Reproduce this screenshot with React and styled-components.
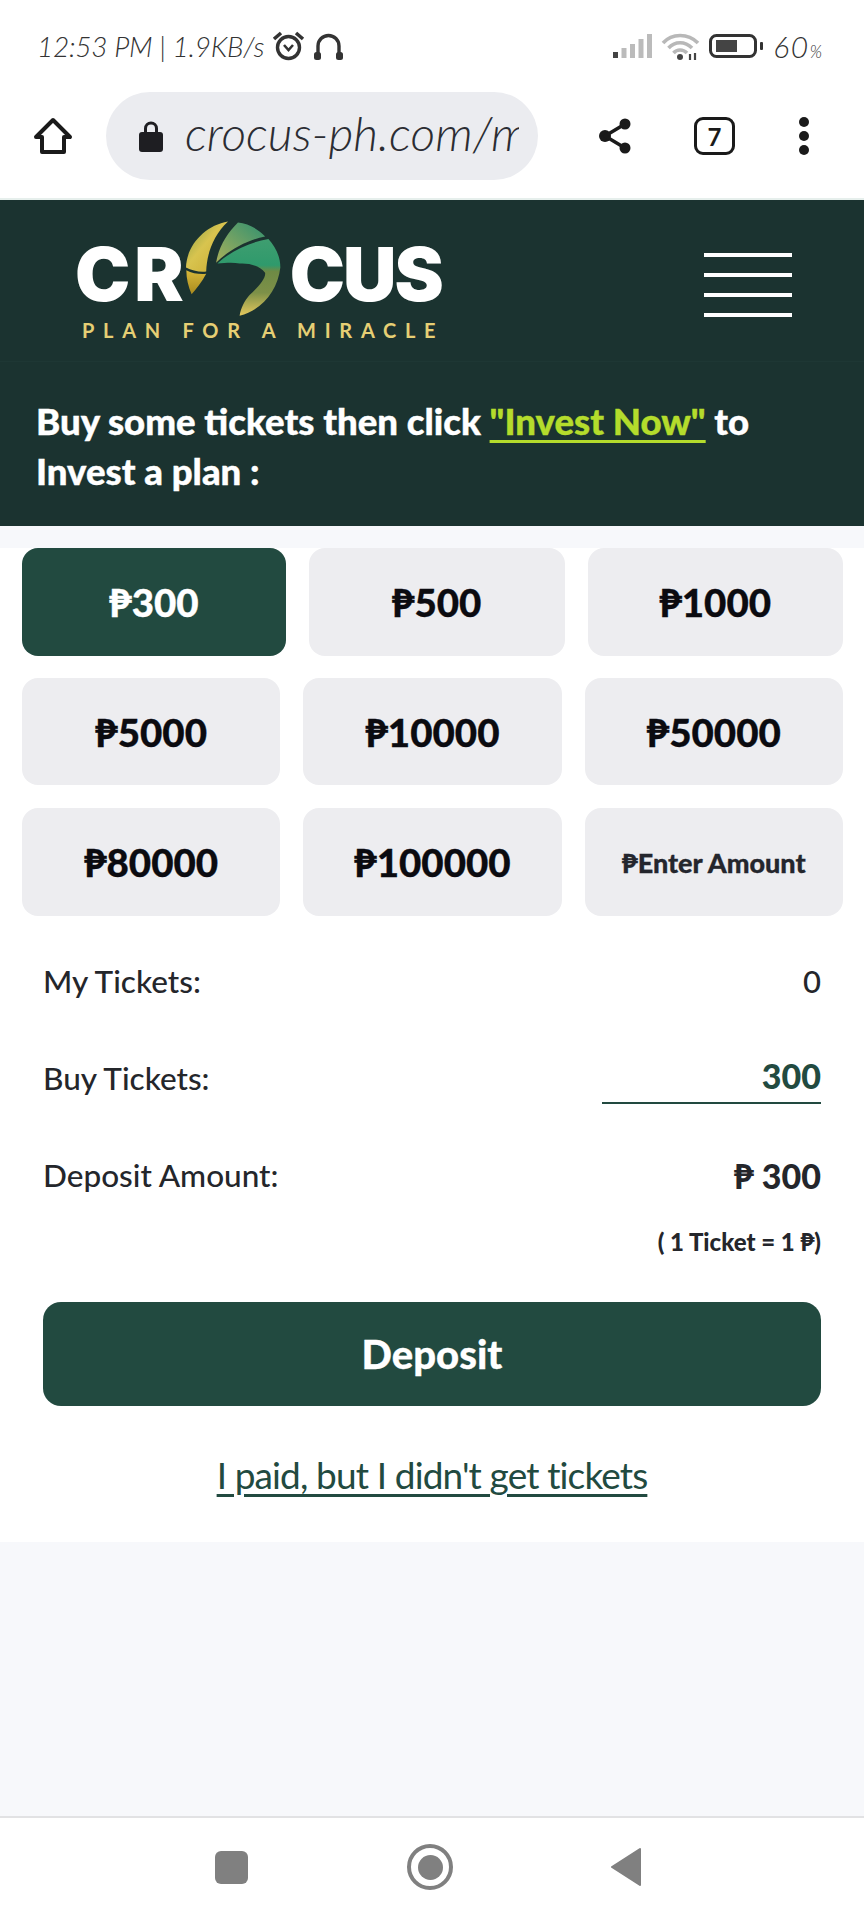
import React from "react";
import styled, { createGlobalStyle } from "styled-components";

const Global = createGlobalStyle`
  html, body { margin: 0; padding: 0; background: #fff; }
  * { box-sizing: border-box; }
`;
const FONT = `Lato, "Noto Sans", sans-serif`;
const GREEN = "#224a40";

const Page = styled.div`
  width: 864px; height: 1920px; display: flex; flex-direction: column;
  background: #f7f8fb; font-family: ${FONT}; overflow: hidden; color: #1d1f24;
`;
const StatusBar = styled.div`
  height: 92px; flex: none; background: #fff; display: flex; align-items: center;
  justify-content: space-between; padding: 0 42px 0 37px;
`;
const StatusGroup = styled.div`display: flex; align-items: center; gap: ${p => p.$gap || 8}px;`;
const StatusText = styled.span`
  font-size: 28px; font-weight: 300; font-style: italic; color: #333; letter-spacing: -0.25px; white-space: nowrap;
`;
const BatteryLevel = styled.span`
  font-size: 30px; font-weight: 300; font-style: italic; color: #333; letter-spacing: 1.5px; white-space: nowrap;
`;
const Percent = styled.span`font-size: 17px; letter-spacing: 0;`;
const BrowserBar = styled.div`
  height: 108px; flex: none; background: #fff; border-bottom: 2px solid #e6efec;
  display: flex; align-items: center; padding: 0 0 18px 33px;
`;
const Pill = styled.div`
  width: 432px; height: 88px; margin-left: 33px; border-radius: 44px; background: #ebecf0;
  display: flex; align-items: center; padding: 0 19px 0 33px; gap: 22px; flex: none;
`;
const Url = styled.span`
  flex: 1; min-width: 0; overflow: hidden; white-space: nowrap; font-size: 48px; font-weight: 300;
  font-style: italic; color: #2b2d33; letter-spacing: 0; line-height: 60px; margin-bottom: 7px;
`;
const BarActions = styled.div`display: flex; align-items: center; margin-left: 60px;`;
const TabCount = styled.div`
  width: 41px; height: 38px; margin-left: 62px; border: 3.5px solid #1a1a1a; border-radius: 9px;
  display: flex; align-items: center; justify-content: center; font-size: 24px; font-weight: 700; color: #1a1a1a;
`;
const Dots = styled.div`
  margin-left: 64px; display: flex; flex-direction: column; gap: 4px;
  & > i { display: block; width: 10px; height: 10px; border-radius: 50%; background: #1a1a1a; }
`;
const Header = styled.header`
  flex: none; height: 162px; background: #1b3330; border-bottom: 1px solid #1e3734;
  display: flex; align-items: flex-start; justify-content: space-between; padding: 20px 72px 0 75px;
`;
const Logo = styled.div`width: 365px; display: flex; flex-direction: column;`;
const LogoMark = styled.div`display: flex; align-items: flex-start; height: 103px;`;
const LogoWord = styled.span`
  font-family: Inter, Lato, sans-serif; font-size: 74px; font-weight: 900; color: #fff; line-height: 52px; margin-top: 28px;
  letter-spacing: ${p => p.$ls || 0}px; white-space: nowrap;
`;
const LogoGraphic = styled.svg`flex: none; margin: 0 9px 0 -3px;`;
const Tagline = styled.div`
  margin-left: 7px; font-size: 20px; font-weight: 700; color: #e6cf74; letter-spacing: 8.7px; line-height: 14px; white-space: nowrap;
`;
const Burger = styled.div`
  width: 88px; margin-top: 33px; display: flex; flex-direction: column; gap: 16px;
  & > i { display: block; height: 4px; background: #fff; }
`;
const Notice = styled.div`
  flex: none; height: 164px; background: #1b3330; padding: 34px 36px 0;
  color: #fff; font-size: 36.6px; font-weight: 900; line-height: 50px; -webkit-text-stroke: 0.4px #fff;
`;
const NoticeLink = styled.a`
  color: #b4dc2c; -webkit-text-stroke: 0.4px #b4dc2c; text-decoration: underline; text-decoration-thickness: 3px; text-underline-offset: 5px;
`;
const Card = styled.main`
  flex: none; height: 994px; margin-top: 22px; background: #fff; padding: 0 21px 0 22px;
  display: flex; flex-direction: column;
`;
const AmountRow = styled.div`
  display: flex; gap: 23px; margin-bottom: ${p => p.$mb}px; height: ${p => p.$h}px; flex: none;
`;
const Amount = styled.button`
  flex: ${p => (p.$active ? "0 0 264px" : "1 1 0")}; min-width: 0; border: 0; padding: 0; border-radius: 16px;
  background: ${p => (p.$active ? GREEN : "#ededf0")}; color: ${p => (p.$active ? "#fff" : p.$small ? "#24262d" : "#0b0b10")};
  font-family: ${FONT}; font-weight: 900; font-size: ${p => (p.$small ? 27 : 38.5)}px; -webkit-text-stroke: 0.3px currentColor;
`;
const Info = styled.div`display: flex; flex-direction: column; padding: 0 22px 0 21px;`;
const InfoRow = styled.div`
  display: flex; justify-content: space-between; align-items: center; height: ${p => p.$h}px; margin-top: ${p => p.$mt || 0}px;
  font-size: 31.5px; font-weight: 500; color: #24262b;
`;
const InfoValue = styled.span`
  font-weight: ${p => (p.$bold ? 900 : 500)}; color: ${p => p.$color || "#24262b"}; font-size: ${p => (p.$bold ? 34 : 31)}px;
`;
const BuyField = styled.div`
  width: 219px; height: 50px; text-align: right; border-bottom: 2px solid ${GREEN}; line-height: 44px; margin-top: 2px;
`;
const RateNote = styled.div`
  text-align: right; font-size: 24px; font-weight: 900; color: #24262b; line-height: 30px; margin-top: 7px;
`;
const DepositButton = styled.button`
  height: 104px; margin: 45px 22px 0 21px; flex: none; border: 0; border-radius: 18px; background: ${GREEN}; color: #fff;
  font-family: ${FONT}; font-size: 40px; font-weight: 900; -webkit-text-stroke: 0.3px #fff;
`;
const Help = styled.a`
  align-self: center; margin: 46px 0 0 -1px; font-size: 37px; font-weight: 400; color: ${GREEN}; letter-spacing: -0.87px;
  text-decoration: underline; text-decoration-thickness: 3px; text-underline-offset: 5px;
`;
const Spacer = styled.div`flex: 1;`;
const NavBar = styled.nav`
  flex: none; height: 104px; background: #fff; border-top: 2px solid #e2e2e4; display: flex; align-items: center; padding-bottom: 4px;
`;
const Square = styled.div`width: 33px; height: 33px; margin-left: 215px; border-radius: 6px; background: #808080;`;
const Ring = styled.div`
  width: 46px; height: 46px; margin-left: 159px; border-radius: 50%; border: 4px solid #808080; display: flex; align-items: center; justify-content: center;
  & > i { display: block; width: 25px; height: 25px; border-radius: 50%; background: #808080; }
`;
const BackIcon = styled.svg`margin-left: 157px;`;

const HomeIcon = () => (
  <svg width="40" height="38" viewBox="0 0 40 38" fill="none" stroke="#1a1a1a" strokeWidth="4" strokeLinejoin="round">
    <path d="M20 3 L37 20 H31 V35 H9 V20 H3 Z" />
  </svg>
);
const LockIcon = () => (
  <svg width="24" height="32" viewBox="0 0 24 32" style={{ flex: "none" }}>
    <path d="M6.5 13 V8.5 a5.5 5.5 0 0 1 11 0 V13" fill="none" stroke="#1e1e22" strokeWidth="3" />
    <rect x="0" y="12" width="24" height="20" rx="3" fill="#1e1e22" />
  </svg>
);
const ShareIcon = () => (
  <svg width="34" height="38" viewBox="0 0 34 38" fill="#1a1a1a">
    <circle cx="27" cy="7" r="5.5" /><circle cx="7" cy="19" r="6" /><circle cx="27" cy="31" r="5.5" />
    <path d="M27 7 L7 19 L27 31" fill="none" stroke="#1a1a1a" strokeWidth="3.5" />
  </svg>
);
const AlarmIcon = () => (
  <svg width="33" height="30" viewBox="0 0 33 30" fill="none" stroke="#333" strokeWidth="3.4">
    <circle cx="16.5" cy="16.5" r="11" />
    <path d="M12 14 L16.5 19 L21 14" strokeWidth="2.6" />
    <path d="M2 8 L9 2 M31 8 L24 2" strokeWidth="3.6" />
  </svg>
);
const HeadphoneIcon = () => (
  <svg width="31" height="29" viewBox="0 0 31 29" fill="none" stroke="#333" strokeWidth="3.4">
    <path d="M5 25 V14 a10.5 10.5 0 0 1 21 0 V25" />
    <rect x="1" y="20" width="7" height="8" rx="2.5" fill="#333" stroke="none" />
    <rect x="23" y="20" width="7" height="8" rx="2.5" fill="#333" stroke="none" />
  </svg>
);
const SignalIcon = () => (
  <svg width="39" height="24" viewBox="0 0 39 24">
    <rect x="0" y="18" width="5" height="6" fill="#444" />
    <rect x="8.5" y="14" width="5" height="10" fill="#bbb" />
    <rect x="17" y="10" width="5" height="14" fill="#bbb" />
    <rect x="25.5" y="5" width="5" height="19" fill="#bbb" />
    <rect x="34" y="0" width="5" height="24" fill="#bbb" />
  </svg>
);
const WifiIcon = () => (
  <svg width="39" height="27" viewBox="0 0 39 27" fill="none" stroke="#b8b8b8" strokeWidth="3.6">
    <path d="M2 10 C11 0 27 0 37 10" /><path d="M7.5 15 C14 8 24 8 31 15" /><path d="M12.5 20 C16 16 22 16 26 20" />
    <circle cx="19" cy="24" r="3" fill="#444" stroke="none" />
    <path d="M29 21 V27 M34 20 V27" stroke="#444" strokeWidth="2.2" />
  </svg>
);
const BatteryIcon = () => (
  <svg width="55" height="24" viewBox="0 0 55 24">
    <rect x="1.5" y="1.5" width="45" height="21" rx="6" fill="none" stroke="#333" strokeWidth="3" />
    <rect x="7" y="6" width="21" height="12" fill="#444" />
    <rect x="51" y="8" width="3" height="8" rx="1" fill="#333" />
  </svg>
);
const CrocusIcon = () => (
  <LogoGraphic width="96" height="97" viewBox="380 30 290 290">
    <defs>
      <linearGradient id="gy" x1="0" y1="0" x2="1" y2="1">
        <stop offset="0" stopColor="#7f9b45" /><stop offset="0.45" stopColor="#d8c44f" /><stop offset="1" stopColor="#c9a92f" />
      </linearGradient>
      <linearGradient id="gt" x1="0" y1="0" x2="0" y2="1">
        <stop offset="0" stopColor="#d8b93a" /><stop offset="1" stopColor="#a98a1e" />
      </linearGradient>
      <linearGradient id="gm" x1="0" y1="1" x2="1" y2="0">
        <stop offset="0" stopColor="#a8b05a" /><stop offset="1" stopColor="#2f9070" />
      </linearGradient>
      <linearGradient id="gr" x1="0" y1="0" x2="0" y2="1">
        <stop offset="0" stopColor="#3f9e70" /><stop offset="0.34" stopColor="#2f9a6c" /><stop offset="0.42" stopColor="#6e8a45" /><stop offset="0.7" stopColor="#7d9048" /><stop offset="1" stopColor="#e5c95d" />
      </linearGradient>
    </defs>
    <path d="M510 33 C440 45 385 105 383 172 C400 182 425 186 444 184 C446 130 465 75 510 33 Z" fill="url(#gy)" />
    <path d="M384 180 C402 190 425 193 444 191 C432 215 415 235 400 253 C390 230 384 205 384 180 Z" fill="url(#gt)" />
    <path d="M540 36 C570 38 600 55 622 78 C570 88 510 120 474 158 C480 115 505 70 540 36 Z" fill="url(#gm)" />
    <path d="M632 86 C655 112 668 140 668 172 C660 240 615 300 545 318 C548 295 560 272 575 255 C600 232 625 205 622 188 C605 165 570 158 545 160 C525 155 500 158 478 160 C515 125 575 95 632 86 Z" fill="url(#gr)" />
  </LogoGraphic>
);

const rows = [
  { h: 108, mb: 22, items: [{ t: "₱300", active: true }, { t: "₱500" }, { t: "₱1000" }] },
  { h: 107, mb: 23, items: [{ t: "₱5000" }, { t: "₱10000" }, { t: "₱50000" }] },
  { h: 108, mb: 0, items: [{ t: "₱80000" }, { t: "₱100000" }, { t: "₱Enter Amount", small: true }] },
];

export default function App() {
  return (
    <Page>
      <Global />
      <StatusBar>
        <StatusGroup $gap={8}>
          <StatusText>12:53 PM | 1.9KB/s</StatusText>
          <AlarmIcon />
          <HeadphoneIcon />
        </StatusGroup>
        <StatusGroup $gap={9}>
          <SignalIcon />
          <WifiIcon />
          <BatteryIcon />
          <BatteryLevel>60<Percent>%</Percent></BatteryLevel>
        </StatusGroup>
      </StatusBar>
      <BrowserBar>
        <HomeIcon />
        <Pill>
          <LockIcon />
          <Url>crocus-ph.com/m</Url>
        </Pill>
        <BarActions>
          <ShareIcon />
          <TabCount>7</TabCount>
          <Dots><i /><i /><i /></Dots>
        </BarActions>
      </BrowserBar>
      <Header>
        <Logo>
          <LogoMark>
            <LogoWord $ls={4}>CR</LogoWord>
            <CrocusIcon />
            <LogoWord $ls={-2}>CUS</LogoWord>
          </LogoMark>
          <Tagline>PLAN FOR A MIRACLE</Tagline>
        </Logo>
        <Burger><i /><i /><i /><i /></Burger>
      </Header>
      <Notice>
        Buy some tickets then click <NoticeLink>"Invest Now"</NoticeLink> to<br />Invest a plan :
      </Notice>
      <Card>
        {rows.map((r, i) => (
          <AmountRow key={i} $h={r.h} $mb={r.mb}>
            {r.items.map(it => (
              <Amount key={it.t} $active={it.active} $small={it.small}>{it.t}</Amount>
            ))}
          </AmountRow>
        ))}
        <Info>
          <InfoRow $h={130}><span>My Tickets:</span><InfoValue>0</InfoValue></InfoRow>
          <InfoRow $h={60} $mt={2}>
            <span>Buy Tickets:</span>
            <BuyField><InfoValue $bold $color={GREEN}>300</InfoValue></BuyField>
          </InfoRow>
          <InfoRow $h={90} $mt={22}><span>Deposit Amount:</span><InfoValue $bold>₱ 300</InfoValue></InfoRow>
          <RateNote>( 1 Ticket = 1 ₱)</RateNote>
        </Info>
        <DepositButton>Deposit</DepositButton>
        <Help>I paid, but I didn't get tickets</Help>
      </Card>
      <Spacer />
      <NavBar>
        <Square />
        <Ring><i /></Ring>
        <BackIcon width="32" height="38" viewBox="0 0 32 38"><path d="M30 1 L2 19 L30 37 Z" fill="#808080" stroke="#808080" strokeWidth="2" strokeLinejoin="round" /></BackIcon>
      </NavBar>
    </Page>
  );
}
